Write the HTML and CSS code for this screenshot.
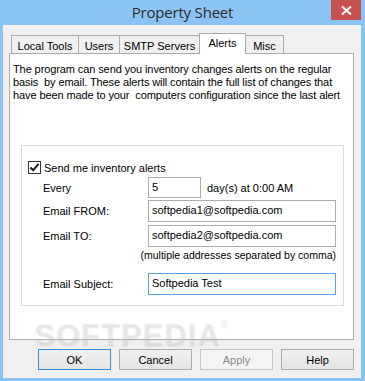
FILE: index.html
```html
<!DOCTYPE html>
<html>
<head>
<meta charset="utf-8">
<link rel="stylesheet" href="styles.css">
</head>
<body>
<div class="window">
  <div class="titlebar">
    <span class="title">Property Sheet</span>
    <div class="close"><svg width="11" height="9" viewBox="0 0 11 9"><path d="M1 0.5 L10 8.5 M10 0.5 L1 8.5" stroke="#fff" stroke-width="2"/></svg></div>
  </div>
  <div class="body">
    <div class="tabs">
      <div class="tab t1">Local Tools</div>
      <div class="tab t2">Users</div>
      <div class="tab t3">SMTP Servers</div>
      <div class="tab t4 active">Alerts</div>
      <div class="tab t5">Misc</div>
    </div>
    <div class="panel">
      <p class="intro">The program can send you inventory changes alerts on the regular<br>basis &nbsp;by email. These alerts will contain the full list of changes that<br>have been made to your &nbsp;computers configuration since the last alert</p>
      <div class="group">
        <div class="check-row">
          <span class="checkbox"><svg width="11" height="11" viewBox="0 0 11 11"><path d="M1.5 5.5 L4.2 8.3 L9.5 1.8" stroke="#1a1a1a" stroke-width="2" fill="none"/></svg></span>
          <span class="check-label">Send me inventory alerts</span>
        </div>
        <div class="row r-every">
          <span class="label">Every</span>
          <div class="field small">5</div>
          <span class="after">day(s) at 0:00 AM</span>
        </div>
        <div class="row r-from">
          <span class="label">Email FROM:</span>
          <div class="field wide">softpedia1@softpedia.com</div>
        </div>
        <div class="row r-to">
          <span class="label">Email TO:</span>
          <div class="field wide">softpedia2@softpedia.com</div>
        </div>
        <div class="note">(multiple addresses separated by comma)</div>
        <div class="row r-subject">
          <span class="label">Email Subject:</span>
          <div class="field wide focus">Softpedia Test</div>
        </div>
      </div>
    </div>
    <div class="buttons">
      <div class="btn default">OK</div>
      <div class="btn">Cancel</div>
      <div class="btn disabled">Apply</div>
      <div class="btn">Help</div>
    </div>
  </div>
  <div class="watermark">SOFTPEDIA<sup>®</sup></div>
</div>
</body>
</html>
```
FILE: styles.css
```css
* { box-sizing: border-box; }
html, body { margin: 0; padding: 0; }
body {
  width: 365px;
  height: 381px;
  overflow: hidden;
  background: #8ac3f4;
  font-family: "Liberation Sans", Arial, sans-serif;
  font-size: 11px;
  color: #000;
}
.window {
  position: relative;
  width: 365px;
  height: 381px;
  display: flex;
  flex-direction: column;
}
.titlebar {
  position: relative;
  height: 25px;
  background: #8ac3f4;
  display: flex;
  align-items: center;
  justify-content: center;
}
.title {
  font-family: "Open Sans", "Noto Sans", sans-serif;
  font-size: 15px;
  color: #2c2c2c;
  margin-top: -1px;
  letter-spacing: -0.2px;
}
.close {
  position: absolute;
  top: 0;
  right: 4px;
  width: 30px;
  height: 20px;
  background: #c75050;
  display: flex;
  align-items: center;
  justify-content: center;
}
.close svg { display: block; }
.body {
  flex: 1;
  margin: 0 4px 3px 3px;
  background: #f0f0f0;
  padding: 8px 0 8px 0;
  display: flex;
  flex-direction: column;
}
.tabs {
  display: flex;
  align-items: flex-end;
  height: 21px;
  padding-left: 8px;
}
.tab {
  height: 19px;
  border: 1px solid #acacac;
  border-bottom: none;
  background: #f0f0f0;
  margin-left: -1px;
  display: flex;
  align-items: center;
  justify-content: center;
  padding-top: 1px;
  color: #000;
}
.t1 { width: 68px; margin-left: 0; }
.t2 { width: 42px; }
.t3 { width: 81px; }
.t4 { width: 47px; }
.t5 { width: 39px; }
.tab.active {
  position: relative;
  z-index: 1;
  height: 21px;
  background: #fff;
  padding-top: 0;
  padding-bottom: 2px;
}
.panel {
  position: relative;
  margin: -1px 7px 0 6px;
  height: 287px;
  background: #fff;
  border: 1px solid #acacac;
  padding: 9px 9px 0 0;
}
.intro {
  margin: 0 0 0 3px;
  line-height: 13px;
  white-space: nowrap;
  letter-spacing: -0.1px;
}
.group {
  margin: 43px 0 0 11px;
  height: 161px;
  border: 1px solid #dcdcdc;
  padding: 15px 0 0 6px;
  display: flex;
  flex-direction: column;
}
.check-row {
  display: flex;
  align-items: center;
  height: 13px;
}
.checkbox {
  width: 13px;
  height: 13px;
  border: 1px solid #333;
  background: #fff;
  display: flex;
  align-items: center;
  justify-content: center;
}
.checkbox svg { display: block; }
.check-label { margin-left: 3px; }
.row {
  display: flex;
  align-items: center;
  margin-left: 15px;
  width: 293px;
}
.label { width: 105px; }
.r-every { margin-top: 3px; height: 21px; }
.r-from { margin-top: 2px; height: 22px; }
.r-to { margin-top: 3px; height: 22px; }
.r-subject { margin-top: 11px; height: 22px; }
.field {
  height: 100%;
  border: 1px solid #acacac;
  background: #fff;
  padding: 2px 0 0 3px;
  font-size: 11px;
  line-height: 15px;
}
.field.small { width: 53px; }
.field.wide { width: 188px; }
.field.focus { border-color: #569de5; }
.after { margin-left: 6px; }
.note {
  margin: 2px 0 0 15px;
  width: 293px;
  height: 13px;
  line-height: 13px;
  text-align: right;
  font-size: 10.5px;
}
.buttons {
  display: flex;
  justify-content: flex-end;
  gap: 8px;
  margin-top: 9px;
  padding-right: 7px;
}
.btn {
  width: 73px;
  height: 21px;
  border: 1px solid #acacac;
  background: linear-gradient(#f0f0f0, #e5e5e5);
  display: flex;
  align-items: center;
  justify-content: center;
  font-size: 11px;
}
.btn.default { border-color: #3c8ce0; }
.btn.disabled {
  border-color: #c5c5c5;
  background: #f4f4f4;
  color: #8a8a8a;
}
.watermark {
  position: absolute;
  left: 34px;
  top: 318px;
  font-family: "Liberation Sans", Arial, sans-serif;
  font-weight: bold;
  font-size: 31px;
  letter-spacing: 1px;
  color: rgba(255, 255, 255, 0.3);
  text-shadow: 0 0 1px rgba(0, 0, 0, 0.09), 1px 1px 1px rgba(0, 0, 0, 0.05);
  pointer-events: none;
}
.watermark sup { font-size: 10px; vertical-align: 18px; font-weight: normal; }
```
